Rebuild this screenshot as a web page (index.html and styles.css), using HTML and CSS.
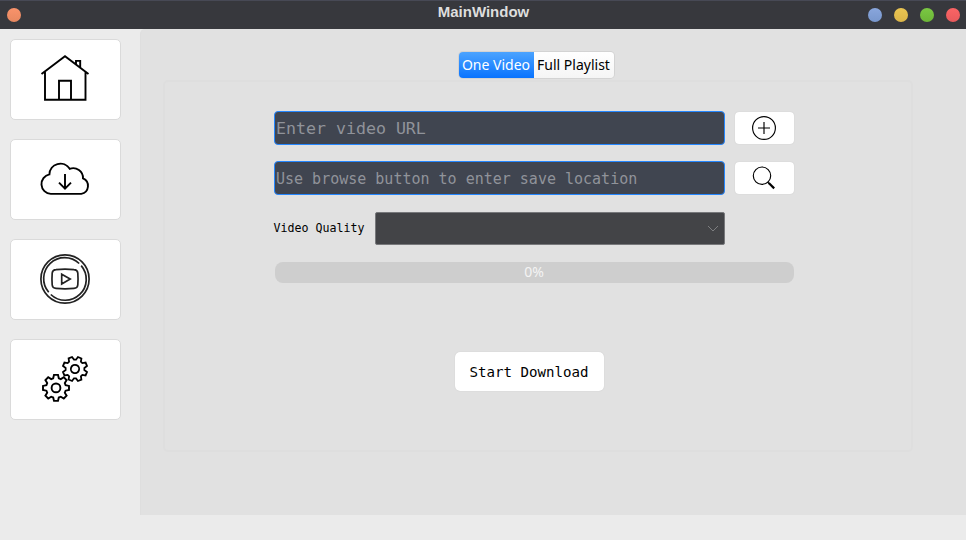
FILE: index.html
```html
<!DOCTYPE html>
<html lang="en">
<head>
<meta charset="utf-8">
<title>MainWindow</title>
<link rel="stylesheet" href="styles.css">
</head>
<body>
<header class="titlebar">
  <span class="dot orange"></span>
  <h1 class="title">MainWindow</h1>
  <div class="controls">
    <span class="dot blue"></span><span class="dot yellow"></span><span class="dot green"></span><span class="dot red"></span>
  </div>
</header>
<div class="window">
  <nav class="sidebar">
    <button class="nav-button" aria-label="Home">
      <svg class="nav-icon" viewBox="0 0 50 50"><path d="M1.5 20 25 2.2 48.5 20M5 18v27.8h40.5V18M19 45.8V26.8h12v19M36 10V6.9h4.2v6.5"/></svg>
    </button>
    <button class="nav-button" aria-label="Download">
      <svg class="nav-icon" viewBox="0 0 50 50"><path d="M10.8 39.9A9.85 9.85 0 0 1 9.4 20.4 11 11 0 0 1 29.7 14.8 9.8 9.8 0 0 1 43 24.3 8.2 8.2 0 0 1 41.3 39.9ZM25 20v15M19 28.6l6 6 6-6"/></svg>
    </button>
    <button class="nav-button" aria-label="Videos">
      <svg class="nav-icon video" viewBox="0 0 50 50"><circle cx="25" cy="25" r="24.1"/><path d="M39.2 9.5A21 21 0 0 0 8.7 38.3M10.8 40.5A21 21 0 0 0 41.2 11.6"/><path d="M16 15.6Q25 14.8 34 15.6 37.5 15.8 37.8 19 38.3 25 37.8 31 37.5 34.2 34 34.4 25 35.2 16 34.4 12.5 34.2 12.2 31 11.7 25 12.2 19 12.5 15.8 16 15.6ZM21.7 20.2v9.8l8.5-4.9Z"/></svg>
    </button>
    <button class="nav-button" aria-label="Settings">
      <svg class="nav-icon" viewBox="0 0 50 50">
        <defs><path id="gear" d="M-2-13H2L2.8-9.6 4.8-8.8 7.8-10.6 10.6-7.8 8.8-4.8 9.6-2.8 13-2V2L9.6 2.8 8.8 4.8 10.6 7.8 7.8 10.6 4.8 8.8 2.8 9.6 2 13H-2L-2.8 9.6-4.8 8.8-7.8 10.6-10.6 7.8-8.8 4.8-9.6 2.8-13 2V-2L-9.6-2.8-8.8-4.8-10.6-7.8-7.8-10.6-4.8-8.8-2.8-9.6ZM4.4 0A4.4 4.4 0 1 1-4.4 0 4.4 4.4 0 1 1 4.4 0Z"/></defs>
        <use href="#gear" transform="translate(16 33.9)"/>
        <use href="#gear" transform="translate(35 15) rotate(22.5) scale(.94)"/>
      </svg>
    </button>
  </nav>
  <main class="content">
    <div class="tabs"><button class="tab active">One Video</button><button class="tab">Full Playlist</button></div>
    <section class="pane">
      <div class="row">
        <input class="field url" placeholder="Enter video URL" aria-label="Video URL">
        <button class="small-button" aria-label="Add"><svg class="tool-icon" viewBox="0 0 24 24"><circle cx="12" cy="12" r="11.4"/><path d="M12 6v12M6 12h12"/></svg></button>
      </div>
      <div class="row">
        <input class="field" placeholder="Use browse button to enter save location" aria-label="Save location">
        <button class="small-button" aria-label="Browse"><svg class="tool-icon" viewBox="0 0 24 24"><circle cx="10" cy="9.7" r="8.7"/><path d="M15.5 16l2 2"/><path class="handle" d="M16.8 17l5.4 5.4"/></svg></button>
      </div>
      <div class="row quality">
        <span class="label">Video Quality</span>
        <div class="select"><svg class="chevron" viewBox="0 0 12 7"><path d="M1 1l5 5 5-5"/></svg></div>
      </div>
      <div class="progress">0%</div>
      <button class="start">Start Download</button>
    </section>
  </main>
</div>
</body>
</html>
```
FILE: styles.css
```css
* { box-sizing: border-box; }
body { margin: 0; width: 966px; height: 540px; overflow: hidden; background: #ebebeb; font-family: "Noto Sans", sans-serif; }
button { border: 0; padding: 0; margin: 0; font: inherit; color: #000; background: #fff; }
svg { display: block; fill: none; stroke: #000; }

.titlebar { height: 29px; padding: 0 6px 0 7px; display: grid; grid-template-columns: 92px 1fr 92px; align-items: center; background: #37383d; border-top: 1px solid #474955; }
.title { margin: 0; padding-bottom: 7px; text-align: center; font: bold 15px/20px "Liberation Sans", sans-serif; color: #dedede; }
.controls { display: flex; gap: 12px; }
.dot { width: 14px; height: 14px; border-radius: 50%; }
.orange { background: linear-gradient(#f9936b, #e78860); }
.blue { background: linear-gradient(#89a6dc, #7897cd); }
.yellow { background: linear-gradient(#eac552, #dbb548); }
.green { background: linear-gradient(#7ac843, #6cb537); }
.red { background: linear-gradient(#fb6465, #e85a5c); }

.window { display: flex; height: 511px; }
.sidebar { width: 140px; padding: 10px; display: flex; flex-direction: column; gap: 19px; }
.nav-button { width: 111px; height: 81px; display: flex; align-items: center; justify-content: center; border: 1px solid #dadada; border-radius: 5px; }
.nav-icon { width: 50px; height: 50px; margin: -1px 1px 0 0; stroke-width: 1.9; }
.video { stroke: #222; stroke-width: 1.7; }

.content { width: 826px; height: 486px; padding: 23px 53px 0 21px; display: flex; flex-direction: column; align-items: center; background: #e1e1e1; border-left: 1px solid #dedede; border-top-left-radius: 5px; }
.tabs { display: flex; height: 26px; margin-left: -3px; border-radius: 4px; overflow: hidden; box-shadow: 0 0 0 1px #d3d3d3; }
.tab { width: 80px; font-size: 14px; line-height: 26px; background: linear-gradient(#fff, #f5f5f5); white-space: nowrap; }
.active { width: 75px; color: #fff; background: linear-gradient(#4ba3ff, #0a74ff); }
.pane { width: 750px; height: 372px; margin-top: 2px; padding: 30px 0 0 110px; display: flex; flex-direction: column; border: 2px solid #dedede; padding: 29px 0 0 109px; border-radius: 5px; }
.row { display: flex; gap: 10px; height: 34px; margin-bottom: 16px; }
.field { width: 451px; height: 34px; padding: 1px 1.5px 0; border: 1px solid #2587ff; border-radius: 4px; background: #404550; font: 15px "DejaVu Sans Mono", monospace; outline: 0; }
.field::placeholder { color: #90939a; opacity: 1; }
.url { font-size: 16.6px; }
.small-button { width: 59px; height: 32px; margin-top: 1px; display: flex; align-items: center; justify-content: center; border-radius: 4px; box-shadow: 0 0 1px #bbb; }
.tool-icon { width: 24px; height: 24px; stroke-width: 1.15; }
.handle { stroke-width: 2.2; }
.quality { gap: 0; height: 33px; margin: 1px 0 17px; }
.label { width: 101px; font: 11.63px/33px "DejaVu Sans Mono", monospace; }
.select { width: 350px; height: 33px; padding-right: 5px; display: flex; align-items: center; justify-content: flex-end; background: #434447; border: 1px solid #77787b; border-radius: 2px; }
.chevron { width: 12px; height: 7px; stroke: #7d7e80; }
.progress { width: 519px; height: 21px; margin: 0 0 69px 1px; border-radius: 8px; background: #cecece; color: #f4f4f4; text-align: center; font-size: 14px; line-height: 20px; }
.start { width: 149px; height: 39px; margin-left: 181px; border-radius: 5px; box-shadow: 0 0 1px #bbb; font: 14.12px "DejaVu Sans Mono", monospace; }
```
